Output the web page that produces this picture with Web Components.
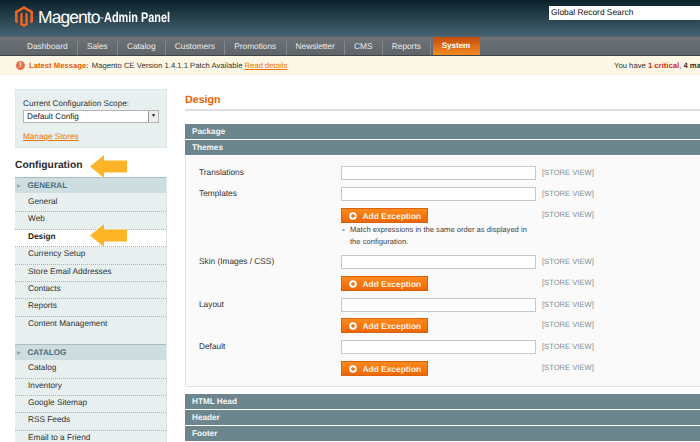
<!doctype html>
<html>
<head>
<meta charset="utf-8">
<title>Magento Admin Panel</title>
<style>
  html, body { margin: 0; padding: 0; height: 442px; overflow: hidden; background: #fff; }
  body { font: 8.25px "Liberation Sans", Arial, sans-serif; color: #2f2f2f; text-rendering: geometricPrecision; }
  .page { width: 760px; }
</style>
</head>
<body>
<div class="page">
  <admin-header></admin-header>
  <admin-nav>
    <nav-tab>Dashboard</nav-tab>
    <nav-tab>Sales</nav-tab>
    <nav-tab>Catalog</nav-tab>
    <nav-tab>Customers</nav-tab>
    <nav-tab>Promotions</nav-tab>
    <nav-tab>Newsletter</nav-tab>
    <nav-tab>CMS</nav-tab>
    <nav-tab>Reports</nav-tab>
    <nav-tab active>System</nav-tab>
  </admin-nav>
  <notice-bar></notice-bar>
  <config-layout>
    <config-sidebar slot="side">
      <side-section title="GENERAL">
        <side-item>General</side-item>
        <side-item>Web</side-item>
        <side-item active>Design<call-arrow style="top:-6px"></call-arrow></side-item>
        <side-item>Currency Setup</side-item>
        <side-item>Store Email Addresses</side-item>
        <side-item>Contacts</side-item>
        <side-item>Reports</side-item>
        <side-item last>Content Management</side-item>
      </side-section>
      <side-section title="CATALOG">
        <side-item>Catalog</side-item>
        <side-item>Inventory</side-item>
        <side-item>Google Sitemap</side-item>
        <side-item>RSS Feeds</side-item>
        <side-item last>Email to a Friend</side-item>
      </side-section>
    </config-sidebar>
    <design-form slot="main"></design-form>
  </config-layout>
</div>

<script>
function define(name, css, html) {
  customElements.define(name, class extends HTMLElement {
    constructor() {
      super();
      this.attachShadow({mode: "open"});
      this.shadowRoot.innerHTML = `<style>${css}</style>${typeof html === "function" ? html(this) : html}`;
    }
  });
}

define("admin-header", `
  :host { display: flex; justify-content: space-between; height: 36px; background: linear-gradient(#0b222c, #456270); border-bottom: 1px solid #56696f; }
  .logo { display: flex; align-items: flex-start; padding: 6px 0 0 15px; color: #fff; }
  .logo svg { margin-right: 5px; }
  .brand { font: 17.5px/22px "Liberation Sans", sans-serif; letter-spacing: -.95px; width: 66px; white-space: nowrap; }
  .tm { font-size: 4px; vertical-align: 3px; letter-spacing: 0; }
  .panel { font: bold 14px/22px "Liberation Sans", sans-serif; transform: scaleX(.78); transform-origin: left; white-space: nowrap; }
  .search { width: 211px; height: 13.5px; margin-top: 6px; box-sizing: border-box; background: #fff; padding: 0 2px; font: 8.4px/13px "Liberation Sans", sans-serif; color: #111; }
`, `
  <div class="logo">
    <svg width="18" height="21" viewBox="0 0 20 23" preserveAspectRatio="none"><path fill="#f26322" d="M10 0 0 5.8v11.6l2.9 1.7V7.5L10 3.4l7.1 4.1v11.6l2.9-1.7V5.800z"/><path fill="#f26322" d="M8.5 6.900 5.8 8.500v12.200L10 23l4.200-2.300V8.500l-2.700-1.600v12.300L10 20l-1.500-.8z"/></svg>
    <span class="brand">Magento<span class="tm">™</span></span>
    <span class="panel">Admin Panel</span>
  </div>
  <div class="search">Global Record Search</div>
`);

define("admin-nav", `
  :host { display: flex; height: 18px; padding-left: 18px; background: linear-gradient(#6e7378, #5f6469); border-bottom: 1px solid #3d4347; }
`, `<slot></slot>`);

define("nav-tab", `
  :host { display: block; height: 18px; padding: 0 10.300px 0 9px; font: 8.3px/18px "Liberation Sans", sans-serif; color: #e9ecee; position: relative; }
  :host::after { content: ""; position: absolute; right: 0; top: 4px; bottom: 0; width: 1px; background: #85898d; }
  :host([active]) { margin-left: 1.600px; font-weight: bold; font-size: 8px; color: #fff; background: linear-gradient(#c44c08, #f48c24); padding: 0 10px 0 9px; }
  :host([active])::after { display: none; }
`, `<slot></slot>`);

define("notice-bar", `
  :host { display: flex; align-items: center; height: 18px; padding-left: 16px; background: #fdf8e6; border-bottom: 1px solid #f3efe0; font-size: 7.7px; color: #333; white-space: nowrap; overflow: hidden; }
  .left { display: flex; align-items: center; width: 598px; flex: none; }
  .dot { width: 9px; height: 9px; border-radius: 50%; background: #e2744f; color: #fff; font: bold 7px/9px "Liberation Sans", sans-serif; text-align: center; margin-right: 4px; }
  b { color: #eb5e00; margin-right: 3px; }
  a { color: #ea7601; text-decoration: underline; margin-left: 2px; }
  .crit { color: #d8261c; font-weight: bold; }
  .major { font-weight: bold; }
`, `
  <div class="left"><span class="dot">!</span><b>Latest Message:</b> Magento CE Version 1.4.1.1 Patch Available <a>Read details</a></div>
  <div>You have <span class="crit">1 critical</span>, <span class="major">4 major</span></div>
`);

define("config-layout", `
  :host { display: flex; padding: 14px 0 0 15px; }
  .side { width: 152px; flex: none; }
  .main { flex: 1; margin-left: 18px; }
`, `<div class="side"><slot name="side"></slot></div><div class="main"><slot name="main"></slot></div>`);

define("call-arrow", `
  :host { position: absolute; left: 75px; top: 4px; width: 37px; height: 23px; }
  svg { display: block; filter: drop-shadow(0 0 1px #fff); }
`, `<svg width="37" height="23" viewBox="0 0 37 23"><path fill="#fdb527" d="M0 11.500 14 0v5.500h23v12H14V23z"/></svg>`);

define("config-sidebar", `
  :host { display: block; width: 152px; }
  .scope { height: 59px; box-sizing: border-box; padding: 8px 7px; background: #e7efef; border: 1px solid #dfe8e8; }
  label { display: block; font-size: 8.2px; line-height: 12px; color: #333; }
  .select { display: flex; justify-content: space-between; align-items: center; width: 136px; height: 13px; background: #fff; border: 1px solid #b5b5b5; font-size: 8.2px; line-height: 12px; padding-left: 3px; box-sizing: border-box; color: #222; }
  .btn { width: 9px; height: 11px; background: #eee; border-left: 1px solid #999; text-align: center; font-size: 5px; line-height: 11px; color: #000; }
  a { display: block; margin-top: 8px; font-size: 8.2px; line-height: 11px; color: #ea7601; text-decoration: underline; }
  .head { position: relative; height: 26px; margin-top: 3px; padding-top: 8px; box-sizing: border-box; font: bold 10.3px/14px "Liberation Sans", sans-serif; color: #2b2b2b; background: #fff; }
`, `
  <div class="scope">
    <label>Current Configuration Scope:</label>
    <div class="select">Default Config<span class="btn">▼</span></div>
    <a>Manage Stores</a>
  </div>
  <div class="head">Configuration<call-arrow></call-arrow></div>
  <slot></slot>
`);

define("side-section", `
  :host { display: block; background: #e7efef; border-right: 1px solid #dde6e6; }
  .title { display: flex; align-items: center; height: 16px; padding-left: 2px; background: #cddde0; border-top: 1px solid #a9bcc0; box-sizing: border-box; font: bold 8.1px/14px "Liberation Sans", sans-serif; color: #4a6b7c; }
  .title i { width: 0; height: 0; border: 2.500px solid transparent; border-left: 4px solid #8fa9ae; margin-right: 4.500px; }
  .items { padding: 1px 0 11px; }
  :host(:first-child) .items { padding: 2px 0 10px; }
`, (el) => `<div class="title"><i></i>${el.getAttribute("title")}</div><div class="items"><slot></slot></div>`);

define("side-item", `
  :host { display: block; position: relative; height: 17.4px; box-sizing: border-box; padding-left: 13px; font-size: 8.25px; line-height: 14.500px; color: #333; border-bottom: 1px dotted #aab5b5; }
  :host([active]) { background: #fff; font-weight: bold; color: #222; }
  :host([last]) { border-bottom: 0; }
`, `<slot></slot>`);

define("section-bar", `
  :host { display: block; height: 15px; margin-bottom: 1px; padding-left: 7px; background: #6d868d; font: bold 8.2px/15px "Liberation Sans", sans-serif; color: #f4f6f6; }
`, `<slot></slot>`);

define("add-button", `
  :host { display: flex; align-items: center; height: 15px; width: 87px; box-sizing: border-box; padding-left: 7px; background: linear-gradient(#fb8a1e, #ee6606); border: 1px solid #d9620a; font: bold 8.4px/14px "Liberation Sans", sans-serif; color: #fff0e0; }
  svg { margin-right: 5.500px; flex: none; }
`, `<svg width="8" height="8" viewBox="0 0 8 8"><circle cx="4" cy="4" r="3.800" fill="#fff"/><path d="M4 2v4M2 4h4" stroke="#e8690e" stroke-width="1.300"/></svg><slot></slot>`);

define("text-box", `
  :host { display: block; height: 14px; box-sizing: border-box; background: #fff; border: 1px solid #c8c8c8; }
`, ``);

define("form-row", `
  :host { display: grid; grid-template-columns: 136px 195px auto; column-gap: 6px; margin-top: 7px; }
  :host(:first-child) { margin-top: 0; }
  .label { font-size: 8.3px; line-height: 12px; color: #333; }
  .scope { font-size: 7.6px; line-height: 13px; color: #7b8d94; }
`, (el) => `<div class="label">${el.getAttribute("label") || ""}</div><div><slot></slot></div><div class="scope">[STORE VIEW]</div>`);

define("design-form", `
  :host { display: block; width: 570px; }
  h3 { margin: 5px 0 0; font: bold 10.7px/13px "Liberation Sans", sans-serif; color: #eb5e00; padding-bottom: 2px; border-bottom: 2px solid #dfdfdf; }
  .gap { height: 13px; }
  .panel { height: 231px; box-sizing: border-box; margin-bottom: 7px; padding: 10px 0 0 13px; background: #fafafa; border: 1px solid #e3e3e3; border-top: 0; display: flex; flex-direction: column; }
  .note { display: flex; font-size: 7.6px; line-height: 12px; color: #444; width: 195px; margin-top: 1px; }
  .note i { font-style: normal; color: #8fa9ae; font-size: 5px; margin-right: 3px; width: 6px; flex: none; }
`, `
  <h3>Design</h3>
  <div class="gap"></div>
  <section-bar>Package</section-bar>
  <section-bar>Themes</section-bar>
  <div class="panel">
    <form-row label="Translations"><text-box></text-box></form-row>
    <form-row label="Templates"><text-box></text-box></form-row>
    <form-row><add-button>Add Exception</add-button><div class="note"><i>▲</i><span>Match expressions in the same order as displayed in the configuration.</span></div></form-row>
    <form-row label="Skin (Images / CSS)"><text-box></text-box></form-row>
    <form-row><add-button>Add Exception</add-button></form-row>
    <form-row label="Layout"><text-box></text-box></form-row>
    <form-row style="margin-top:6px"><add-button>Add Exception</add-button></form-row>
    <form-row label="Default"><text-box></text-box></form-row>
    <form-row><add-button>Add Exception</add-button></form-row>
  </div>
  <section-bar>HTML Head</section-bar>
  <section-bar>Header</section-bar>
  <section-bar>Footer</section-bar>
`);
</script>
</body>
</html>
